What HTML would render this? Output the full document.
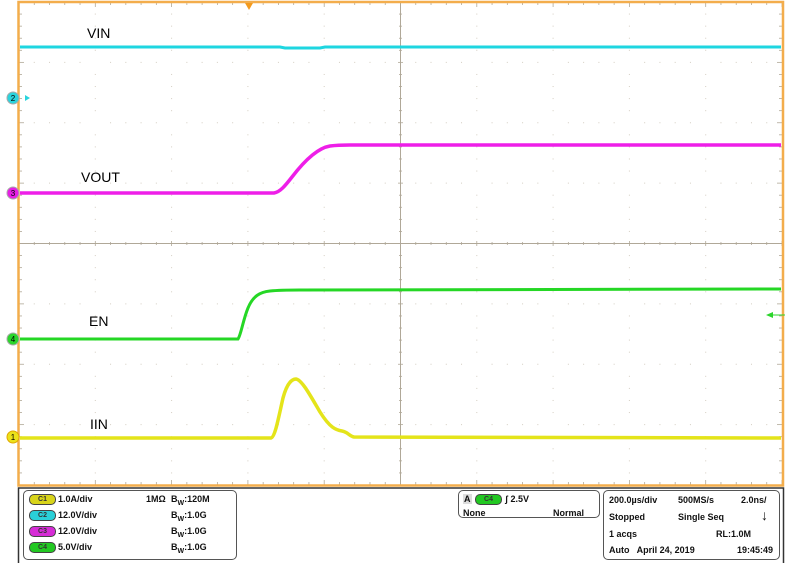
<!DOCTYPE html>
<html><head><meta charset="utf-8"><style>
html,body{margin:0;padding:0;background:#fff;}
body{width:795px;height:563px;position:relative;overflow:hidden;font-family:"Liberation Sans",Arial,sans-serif;}
svg{position:absolute;left:0;top:0;}
.t{position:absolute;font-size:9px;font-weight:bold;color:#111;white-space:nowrap;line-height:10px;}
.lbl{position:absolute;font-size:14px;color:#000;}
.bx{position:absolute;border:1.5px solid #555;border-radius:5px;}
.badge{position:absolute;width:25px;height:9px;border-radius:5px;border:1px solid #444;font-size:7px;text-align:center;line-height:9px;color:#333;font-weight:bold;}
</style></head><body>
<svg width="795" height="563" id="s" xmlns="http://www.w3.org/2000/svg">
<g id="grid"></g>
<rect x="18.5" y="2" width="764.5" height="483.5" fill="none" stroke="#f3ad4c" stroke-width="2.5"/>
<polygon points="245,3 253,3 249,10" fill="#f39a1e"/>
<path d="M20,47 L280,47 L285,48 L320,48 L325,47 L781,47" stroke="#1ed6e0" stroke-width="3" fill="none"/>
<path d="M20,193 L274,193 C280,192 285,186 292,177 C305,160 318,148 330,146 C338,145 345,145 350,145 L781,145" stroke="#ee1ee8" stroke-width="3.5" fill="none"/>
<path d="M20,339 L238,339 C241,335 243,320 248,308 C253,296 260,292 270,291 C280,290 290,290 300,290 L781,289" stroke="#25d725" stroke-width="3" fill="none"/>
<path d="M20,438 L271,438 C275,437 278,420 283,398 C287,383 292,379 296,379 C302,380 310,395 320,412 C330,428 336,430 342,431 C348,432 349,436 354,437 L781,438" stroke="#e4e41a" stroke-width="3.5" fill="none"/>
<g font-family="Liberation Sans,sans-serif" font-size="8" text-anchor="middle">
<circle cx="13" cy="98" r="6" fill="#2ad4dd" stroke="#aaa"/><text x="13" y="101">2</text>
<polygon points="30,98 25,95 25,101" fill="#2ad4dd"/>
<circle cx="13" cy="193" r="6" fill="#e61ee4" stroke="#aaa"/><text x="13" y="196">3</text>
<circle cx="13" cy="339" r="6" fill="#2bd52b" stroke="#aaa"/><text x="13" y="342">4</text>
<circle cx="13" cy="437" r="6" fill="#ece21a" stroke="#e0a800"/><text x="13" y="440">1</text>
</g>
<line x1="770" y1="315" x2="785" y2="315" stroke="#2bd52b" stroke-width="1"/>
<polygon points="766,315 773,312 773,318" fill="#2bd52b"/>
<rect x="18.5" y="488" width="765" height="76" fill="#fff" stroke="#333" stroke-width="1.5"/>
</svg>
<div class="lbl" style="left:87px;top:25px;">VIN</div>
<div class="lbl" style="left:81px;top:169px;">VOUT</div>
<div class="lbl" style="left:89px;top:313px;">EN</div>
<div class="lbl" style="left:90px;top:416px;">IIN</div>

<div class="bx" style="left:23px;top:490px;width:212px;height:68px;"></div>
<div class="badge" style="left:29px;top:494px;background:#d8d41a;">C1</div>
<div class="badge" style="left:29px;top:510px;background:#2ad0d8;">C2</div>
<div class="badge" style="left:29px;top:526px;background:#d62cd6;">C3</div>
<div class="badge" style="left:29px;top:542px;background:#22c822;">C4</div>
<div class="t" style="left:58px;top:494px;">1.0A/div</div>
<div class="t" style="left:58px;top:510px;">12.0V/div</div>
<div class="t" style="left:58px;top:526px;">12.0V/div</div>
<div class="t" style="left:58px;top:542px;">5.0V/div</div>
<div class="t" style="left:146px;top:494px;">1MΩ</div>
<div class="t" style="left:171px;top:494px;">B<sub style="font-size:7px">W</sub>:120M</div>
<div class="t" style="left:171px;top:510px;">B<sub style="font-size:7px">W</sub>:1.0G</div>
<div class="t" style="left:171px;top:526px;">B<sub style="font-size:7px">W</sub>:1.0G</div>
<div class="t" style="left:171px;top:542px;">B<sub style="font-size:7px">W</sub>:1.0G</div>

<div class="bx" style="left:458px;top:490px;width:140px;height:26px;"></div>
<div class="t" style="left:463px;top:494px;background:#ddd;padding:0 1px;">A</div>
<div class="badge" style="left:475px;top:494px;background:#22c822;">C4</div>
<div class="t" style="left:505px;top:494px;">ʃ 2.5V</div>
<div class="t" style="left:463px;top:508px;">None</div>
<div class="t" style="left:553px;top:508px;">Normal</div>

<div class="bx" style="left:603px;top:490px;width:175px;height:68px;"></div>
<div class="t" style="left:609px;top:495px;">200.0µs/div</div>
<div class="t" style="left:678px;top:495px;">500MS/s</div>
<div class="t" style="left:741px;top:495px;">2.0ns/</div>
<div class="t" style="left:609px;top:512px;">Stopped</div>
<div class="t" style="left:678px;top:512px;">Single Seq</div>
<div class="t" style="left:761px;top:510px;font-size:14px;font-weight:900;">↓</div>
<div class="t" style="left:609px;top:529px;">1 acqs</div>
<div class="t" style="left:716px;top:529px;">RL:1.0M</div>
<div class="t" style="left:609px;top:545px;">Auto&nbsp;&nbsp; April 24, 2019</div>
<div class="t" style="left:737px;top:545px;">19:45:49</div>
<script>
(function(){
var g=document.getElementById('grid'),h='';
var L=19,R=782,T=2,B=485,dx=(R-L)/10,dy=(B-T)/8;
var c='#d4cec2';
for(var i=1;i<10;i++){var x=L+i*dx;for(var j=0;j<8;j++){for(var k=1;k<5;k++){var y=T+j*dy+k*dy/5;h+='<rect x="'+(x-0.5)+'" y="'+(y-0.5)+'" width="1" height="1" fill="'+c+'"/>';}}}
for(var j=1;j<8;j++){var y=T+j*dy;for(var i=0;i<10;i++){for(var k=1;k<5;k++){var x=L+i*dx+k*dx/5;h+='<rect x="'+(x-0.5)+'" y="'+(y-0.5)+'" width="1" height="1" fill="'+c+'"/>';}}}
var cx=L+5*dx,cy=T+4*dy,cl='#b0a898';
h+='<line x1="'+cx+'" y1="'+T+'" x2="'+cx+'" y2="'+B+'" stroke="'+cl+'" stroke-width="1"/>';
h+='<line x1="'+L+'" y1="'+cy+'" x2="'+R+'" y2="'+cy+'" stroke="'+cl+'" stroke-width="1"/>';
for(var i=0;i<=50;i++){var x=L+i*dx/5,len=(i%5==0)?5:3;
h+='<line x1="'+x+'" y1="'+(cy-len/2)+'" x2="'+x+'" y2="'+(cy+len/2)+'" stroke="'+cl+'" stroke-width="0.8"/>';
h+='<line x1="'+x+'" y1="'+T+'" x2="'+x+'" y2="'+(T+len)+'" stroke="'+cl+'" stroke-width="0.8"/>';
h+='<line x1="'+x+'" y1="'+B+'" x2="'+x+'" y2="'+(B-len)+'" stroke="'+cl+'" stroke-width="0.8"/>';}
for(var j=0;j<=40;j++){var y=T+j*dy/5,len=(j%5==0)?5:3;
h+='<line x1="'+(cx-len/2)+'" y1="'+y+'" x2="'+(cx+len/2)+'" y2="'+y+'" stroke="'+cl+'" stroke-width="0.8"/>';
h+='<line x1="'+L+'" y1="'+y+'" x2="'+(L+len)+'" y2="'+y+'" stroke="'+cl+'" stroke-width="0.8"/>';
h+='<line x1="'+R+'" y1="'+y+'" x2="'+(R-len)+'" y2="'+y+'" stroke="'+cl+'" stroke-width="0.8"/>';}
g.innerHTML=h;
})();
</script>
</body></html>
